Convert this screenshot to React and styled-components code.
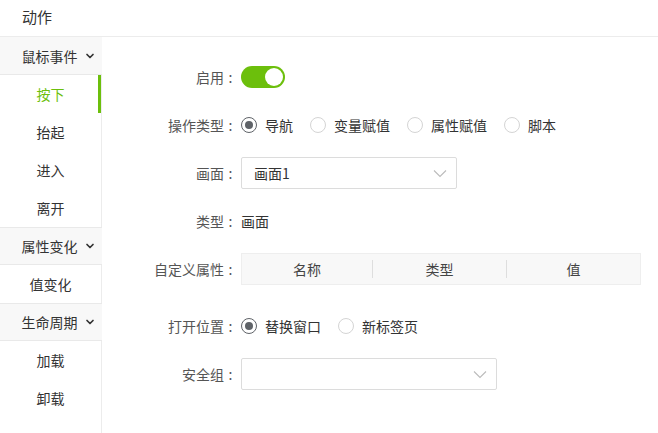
import styled, { createGlobalStyle } from 'styled-components'

const GlobalStyle = createGlobalStyle`
  html, body {
    margin: 0;
    padding: 0;
    background: #fff;
    font-family: "Noto Sans CJK SC", "Noto Sans", sans-serif;
    color: #333;
  }
`;

const GREEN = '#6cbf0c';

const sidebarGroups = [
    { title: '鼠标事件', items: ['按下', '抬起', '进入', '离开'] },
    { title: '属性变化', items: ['值变化'] },
    { title: '生命周期', items: ['加载', '卸载'] },
];

const Chevron = () => (
    <svg width="10" height="10" viewBox="0 0 10 10">
        <path d="M2 3.5 L5 6.5 L8 3.5" fill="none" stroke="#333" strokeWidth="1.7" strokeLinecap="round" strokeLinejoin="round"/>
    </svg>
);

const SelectArrow = () => (
    <svg width="14" height="9" viewBox="0 0 14 9">
        <path d="M1 1.5 L7 7.5 L13 1.5" fill="none" stroke="#bbb" strokeWidth="1.1"/>
    </svg>
);

const RadioGroup = ({options, value}) => (
    <Radios>
        {options.map(o => (
            <RadioItem key={o}>
                <RadioCircle checked={o === value}/>
                <span>{o}</span>
            </RadioItem>
        ))}
    </Radios>
);

const FieldLabel = ({children}) => (
    <Label>
        {children}
        <Colon>:</Colon>
    </Label>
);

const App = () => {
    return (
        <Page>
            <GlobalStyle/>
            <Header>动作</Header>
            <Body>
                <Sidebar>
                    {sidebarGroups.map(g => (
                        <div key={g.title}>
                            <GroupHeader>
                                {g.title}
                                <Chevron/>
                            </GroupHeader>
                            {g.items.map(i => (
                                <Item key={i} active={i === '按下'}>{i}</Item>
                            ))}
                        </div>
                    ))}
                </Sidebar>
                <Form>
                    <Row>
                        <FieldLabel>启用</FieldLabel>
                        <Toggle><Knob/></Toggle>
                    </Row>
                    <Row>
                        <FieldLabel>操作类型</FieldLabel>
                        <RadioGroup options={['导航', '变量赋值', '属性赋值', '脚本']} value={'导航'}/>
                    </Row>
                    <Row>
                        <FieldLabel>画面</FieldLabel>
                        <Select width={216}>
                            <span>画面1</span>
                            <SelectArrow/>
                        </Select>
                    </Row>
                    <Row>
                        <FieldLabel>类型</FieldLabel>
                        <Value>画面</Value>
                    </Row>
                    <Row>
                        <FieldLabel>自定义属性</FieldLabel>
                        <Table>
                            <Th>名称</Th>
                            <Th divider>类型</Th>
                            <Th divider>值</Th>
                        </Table>
                    </Row>
                    <Row extra>
                        <FieldLabel>打开位置</FieldLabel>
                        <RadioGroup options={['替换窗口', '新标签页']} value={'替换窗口'}/>
                    </Row>
                    <Row>
                        <FieldLabel>安全组</FieldLabel>
                        <Select width={256}>
                            <span/>
                            <SelectArrow/>
                        </Select>
                    </Row>
                </Form>
            </Body>
        </Page>
    )
};

const Page = styled.div`
  height: 100vh;
  display: flex;
  flex-direction: column;
`;
const Header = styled.div`
  height: 37px;
  flex-shrink: 0;
  border-bottom: 1px solid #ececec;
  display: flex;
  align-items: center;
  padding-left: 22px;
  padding-bottom: 3px;
  box-sizing: border-box;
  font-size: 15px;
  color: #333;
`;
const Body = styled.div`
  flex: 1;
  display: flex;
`;
const Sidebar = styled.div`
  width: 102px;
  flex-shrink: 0;
  border-right: 1px solid #ececec;
  box-sizing: border-box;
  font-size: 14px;
`;
const GroupHeader = styled.div`
  height: 38px;
  box-sizing: border-box;
  background: #f8f8f8;
  border-top: 1px solid #e9e9e9;
  border-bottom: 1px solid #e9e9e9;
  display: flex;
  align-items: center;
  justify-content: center;
  gap: 7px;
  padding-left: 14px;
  margin-right: -1px;
  div:first-child > & { border-top-color: transparent; }
`;
const Item = styled.div`
  height: 38px;
  display: flex;
  align-items: center;
  justify-content: center;
  color: ${p => p.active ? GREEN : '#333'};
  box-shadow: ${p => p.active ? `inset -3px 0 0 ${GREEN}` : 'none'};
`;
const Form = styled.div`
  flex: 1;
  padding-top: 24px;
  padding-right: 17px;
  display: flex;
  flex-direction: column;
  gap: 16px;
  font-size: 14px;
`;
const Row = styled.div`
  height: 32px;
  display: flex;
  align-items: center;
  margin-top: ${p => p.extra ? '9px' : '0'};
`;
const Label = styled.div`
  width: 135px;
  display: flex;
  justify-content: flex-end;
  color: #555;
  margin-right: 4px;
  flex-shrink: 0;
`;
const Colon = styled.span`
  width: 13px;
  text-align: center;
`;
const Toggle = styled.div`
  width: 44px;
  height: 22px;
  border-radius: 11px;
  background: ${GREEN};
  display: flex;
  align-items: center;
  justify-content: flex-end;
  padding: 0 2px;
  box-sizing: border-box;
`;
const Knob = styled.div`
  width: 18px;
  height: 18px;
  border-radius: 50%;
  background: #fff;
`;
const Radios = styled.div`
  display: flex;
  align-items: center;
  gap: 17px;
  color: #333;
`;
const RadioItem = styled.label`
  display: flex;
  align-items: center;
  gap: 8px;
`;
const RadioCircle = styled.span`
  width: 16px;
  height: 16px;
  box-sizing: border-box;
  border-radius: 50%;
  border: 1px solid ${p => p.checked ? '#5f6368' : '#d4d4d4'};
  display: flex;
  align-items: center;
  justify-content: center;
  &::after {
    content: '';
    width: 8px;
    height: 8px;
    border-radius: 50%;
    background: ${p => p.checked ? '#5f6368' : 'transparent'};
  }
`;
const Select = styled.div`
  width: ${p => p.width}px;
  height: 32px;
  box-sizing: border-box;
  border: 1px solid #dcdcdc;
  border-radius: 2px;
  display: flex;
  align-items: center;
  justify-content: space-between;
  padding: 0 9px 0 12px;
  color: #333;
`;
const Value = styled.div`
  color: #333;
`;
const Table = styled.div`
  flex: 1;
  height: 32px;
  box-sizing: border-box;
  background: #f8f8f8;
  border: 1px solid #eeeeee;
  display: grid;
  grid-template-columns: 130px 1fr 1fr;
  align-items: center;
  color: #444;
`;
const Th = styled.div`
  text-align: center;
  border-left: ${p => p.divider ? '1px solid #dedede' : 'none'};
  line-height: 18px;
`;

export default App;
